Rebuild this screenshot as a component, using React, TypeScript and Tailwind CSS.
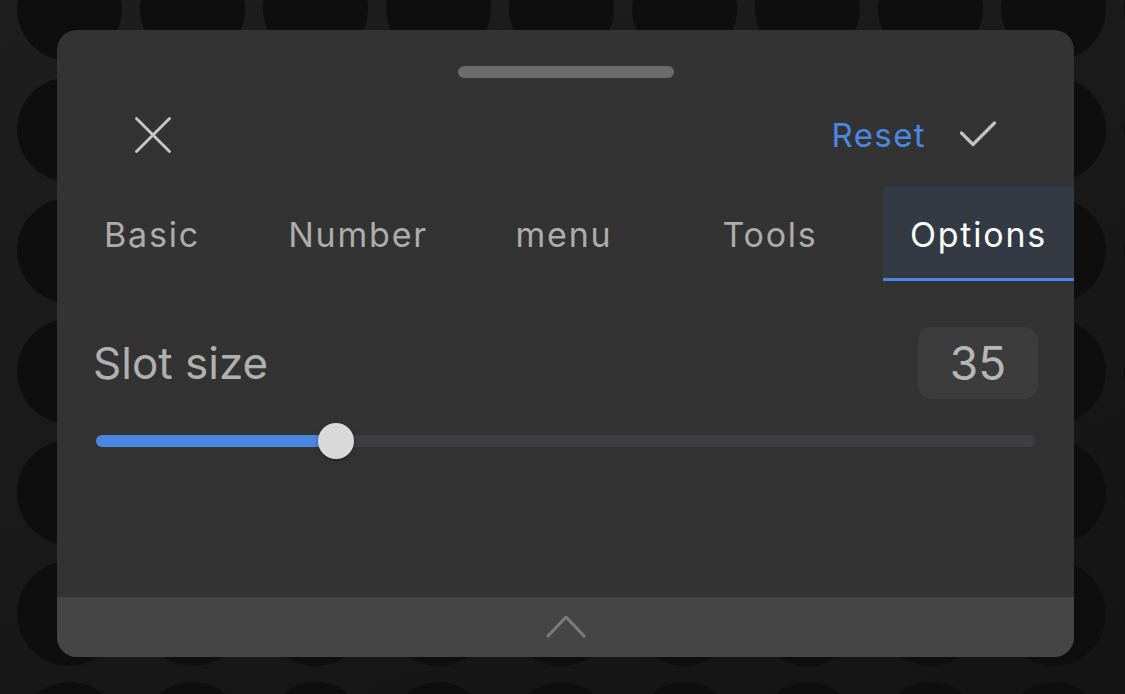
import React from 'react'

const tabs = [
    { label: 'Basic', w: 'w-[198px] pr-[8px]' },
    { label: 'Number', w: 'w-[206px]' },
    { label: 'menu', w: 'w-[206px]' },
    { label: 'Tools', w: 'w-[206px]' },
]

const font = { fontFamily: 'Inter, Roboto, "Liberation Sans", sans-serif' }

export default function App() {
    const value = 35
    const fill = 240 // px of blue before the thumb

    return (
        <main
            style={font}
            className="w-[1125px] h-[694px] overflow-hidden pt-[30px] pl-[57px] [background-color:#181818] [background-image:radial-gradient(circle,#0e0e0e_52px,transparent_53px),linear-gradient(160deg,#1e1e1e,#141414)] [background-size:123px_121px,100%_100%] [background-position:8px_-52px,0_0]"
        >
            <div className="w-[1017px] h-[627px] rounded-[20px] bg-[#333333] overflow-hidden flex flex-col">
                {/* drag handle */}
                <div className="mt-[36px] mx-auto w-[216px] h-[12px] rounded-full bg-[#6b6b6b]" />

                {/* header */}
                <div className="mt-[27px] h-[60px] px-[78px] flex items-center justify-between">
                    <svg width="36" height="36" viewBox="0 0 36 36" fill="none" stroke="#c8c8c8" strokeWidth="2.8" strokeLinecap="round">
                        <path d="M1.5 1.5L34.5 34.5M34.5 1.5L1.5 34.5" />
                    </svg>
                    <div className="flex items-center gap-[34px]">
                        <span className="text-[33px] leading-none tracking-[1.4px] text-[#4a88e2]">Reset</span>
                        <svg width="36" height="36" viewBox="0 0 36 36" fill="none" stroke="#c2c2c2" strokeWidth="3.2" strokeLinecap="round" strokeLinejoin="round">
                            <path d="M1.5 16L13 27.5L34.5 6" />
                        </svg>
                    </div>
                </div>

                {/* tabs */}
                <div className="mt-[21px] h-[95px] flex">
                    {tabs.map(t => (
                        <div key={t.label} className={`${t.w} flex items-center justify-center pt-[1px] text-[34px] tracking-[1.8px] text-[#acacac]`}>
                            {t.label}
                        </div>
                    ))}
                    <div className="ml-[10px] flex-1 flex items-center justify-center text-[34px] tracking-[1.8px] text-white bg-[#343a43] border-b-[3px] border-[#4a88e2] pt-[4px]">
                        Options
                    </div>
                </div>

                {/* slot size */}
                <div className="mt-[46px] px-[36px] flex items-center justify-between">
                    <span className="text-[44px] leading-none text-[#b0b0b0]">Slot size</span>
                    <div className="w-[120px] h-[72px] rounded-[14px] bg-[#3c3c3c] flex items-center justify-center text-[46px] leading-none text-[#b6b6b6]">
                        {value}
                    </div>
                </div>

                <div className="mt-[24px] mx-[39px] h-[36px] relative flex items-center">
                    <div className="w-full h-[12px] rounded-full bg-[#3e3e40]">
                        <div className="h-full rounded-full bg-[#4a86e0]" style={{ width: fill }} />
                    </div>
                    <div
                        className="absolute top-0 w-[36px] h-[36px] rounded-full bg-[#d9d9d9] shadow-[0_1px_4px_rgba(0,0,0,0.35)]"
                        style={{ left: fill - 18 }}
                    />
                </div>

                {/* bottom bar */}
                <div className="mt-auto h-[60px] bg-[#454545] flex items-center justify-center">
                    <svg width="40" height="24" viewBox="0 0 40 24" fill="none" stroke="#7c7c7c" strokeWidth="3" strokeLinecap="round" strokeLinejoin="round">
                        <path d="M2 21L20 2L38 21" />
                    </svg>
                </div>
            </div>
        </main>
    )
}
